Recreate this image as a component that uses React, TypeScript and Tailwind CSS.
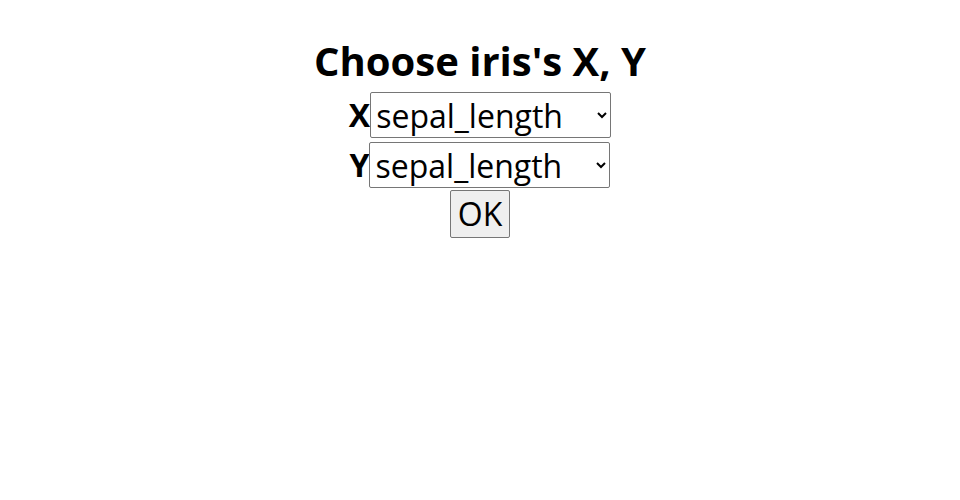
import { useState } from "react";

const COLUMNS = ["sepal_length", "sepal_width", "petal_length", "petal_width"];

function AxisRow({ label, value, onChange }: { label: string; value: string; onChange: (v: string) => void }): JSX.Element {
  return (
    <div className="flex items-center">
      <span className="text-[32px] font-bold leading-[46px]">{label}</span>
      <select
        className="h-[46px] w-[241px] rounded-[2px] border border-[#767676] bg-white pl-[1px] text-[32px] leading-[42px]"
        onChange={(e) => {
          onChange(e.target.value);
        }}
        value={value}
      >
        {COLUMNS.map((c) => (
          <option key={c} value={c}>
            {c}
          </option>
        ))}
      </select>
    </div>
  );
}

export default function App(): JSX.Element {
  const [x, setX] = useState("sepal_length");
  const [y, setY] = useState("sepal_length");

  return (
    <div className="flex min-h-[500px] flex-col items-center bg-white pt-[34px] text-black [font-family:'Open_Sans',sans-serif]">
      <h1 className="text-[40px] font-bold leading-[54px]">Choose iris's X, Y</h1>
      <div className="mt-[4px] flex flex-col items-center gap-[4px]">
        <AxisRow label="X" onChange={setX} value={x} />
        <AxisRow label="Y" onChange={setY} value={y} />
      </div>
      <button
        className="mt-[2px] h-[48px] w-[60px] rounded-[2px] border border-[#767676] bg-[#efefef] text-[32px] leading-[42px]"
        type="button"
      >
        OK
      </button>
    </div>
  );
}
